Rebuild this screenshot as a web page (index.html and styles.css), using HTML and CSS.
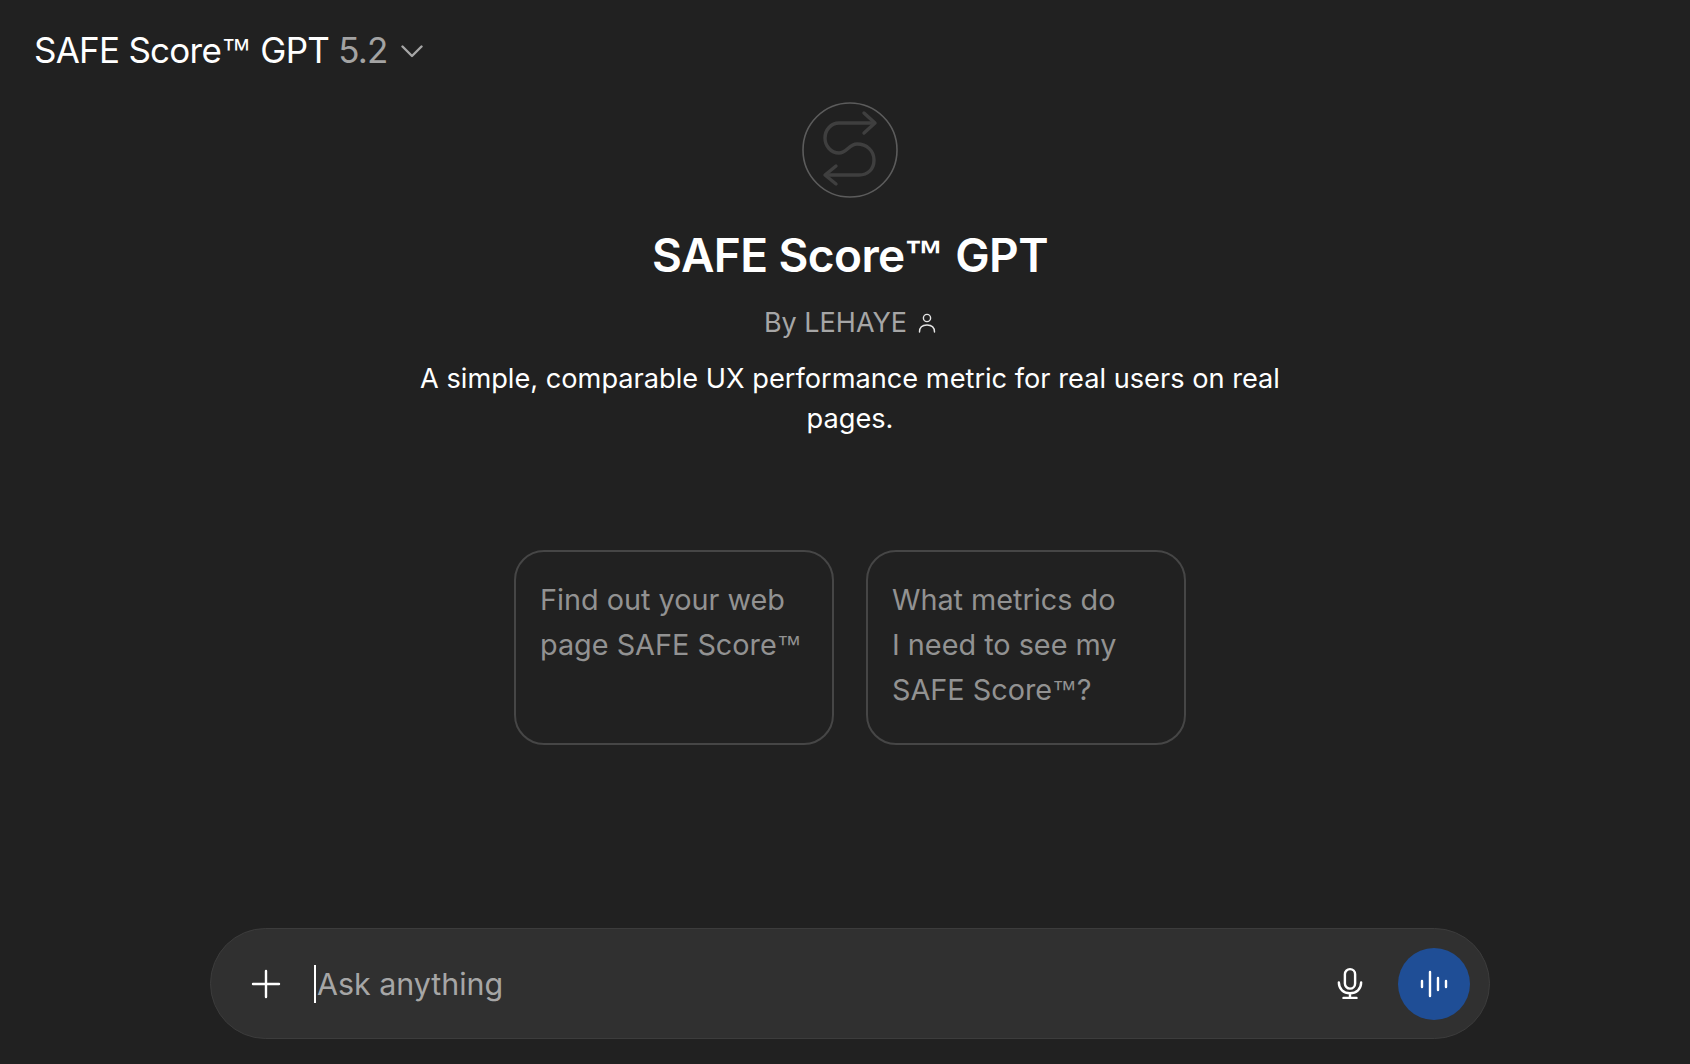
FILE: index.html
```html
<!DOCTYPE html>
<html>

<head>
    <meta charset="utf-8">
    <meta name="viewport" content="width=device-width">
    <title>SAFE Score GPT</title>
    <link rel="stylesheet" href="styles.css">
</head>

<body>
    <div class="page">
        <header class="topbar">
            <span class="model">SAFE Score<span class="tm">™</span> GPT <span class="version">5.2</span></span>
            <svg class="chevron" viewBox="0 0 22 14" width="22" height="14" fill="none" stroke="#a6a6a6" stroke-width="2.4" stroke-linecap="round" stroke-linejoin="round">
                <path d="M1.5 2.5 11 12 20.5 2.5" />
            </svg>
        </header>

        <main class="intro">
            <div class="logo">
                <svg viewBox="0 0 96 96" width="96" height="96" fill="none">
                    <circle cx="48" cy="48" r="47" stroke="#5c5c5c" stroke-width="1.6" />
                    <g stroke="#3f3f3f" stroke-width="3.4" stroke-linecap="round" stroke-linejoin="round">
                        <path d="M72 21H37C29 21 23 28 23 36C23 44 29 51 37 51C45 51 47 42 55 42C65 42 72 49 72 58C72 67 66 73 57 73H24" />
                        <path d="M62 11 73 21 62 31" />
                        <path d="M34 64 23 73 34 82" />
                    </g>
                </svg>
            </div>
            <h1>SAFE Score<span class="tm">™</span> GPT</h1>
            <div class="author">
                <span>By LEHAYE</span>
                <svg viewBox="0 0 18 20" width="18" height="20" fill="none" stroke="#e4e4e4" stroke-width="1.4" stroke-linecap="round">
                    <circle cx="9" cy="5" r="3.6" />
                    <path d="M1.5 19C1.5 14.5 4.5 12 9 12S16.5 14.5 16.5 19" />
                </svg>
            </div>
            <p class="desc">A simple, comparable UX performance metric for real users on real pages.</p>

            <div class="starters">
                <button class="starter"><span>Find out your web<br>page SAFE Score<span class="tm">™</span></span></button>
                <button class="starter"><span>What metrics do<br>I need to see my<br>SAFE Score<span class="tm">™</span>?</span></button>
            </div>
        </main>

        <div class="composer">
            <svg class="plus" viewBox="0 0 30 30" width="30" height="30" stroke="#fff" stroke-width="2.4" stroke-linecap="round">
                <path d="M15 2V28M2 15H28" />
            </svg>
            <div class="field"><span class="caret"></span><span class="placeholder">Ask anything</span></div>
            <svg class="mic" viewBox="0 0 28 34" width="26" height="33" fill="none" stroke="#fff" stroke-width="2.6" stroke-linecap="round">
                <rect x="8.5" y="1.5" width="11" height="21" rx="5.5" />
                <path d="M2 16C2 23 7 27.5 14 27.5S26 23 26 16M14 27.5V32.5M7 32.5H21" />
            </svg>
            <button class="voice">
                <svg viewBox="0 0 28 28" width="28" height="28" stroke="#fff" stroke-width="2.4" stroke-linecap="round">
                    <path d="M2 11V17M10 2V26M18 8V20M26 11V17" />
                </svg>
            </button>
        </div>
    </div>
</body>

</html>
```

FILE: styles.css
```css
* {
    margin: 0;
    padding: 0;
    box-sizing: border-box;
}

body {
    background: #212121;
    color: #fff;
    font-family: Inter, "Liberation Sans", sans-serif;
}

.page {
    height: 1064px;
    display: flex;
    flex-direction: column;
}

.topbar {
    height: 102px;
    padding: 0 0 2px 34px;
    display: flex;
    align-items: center;
    gap: 13px;
}

.model {
    font-size: 35px;
    line-height: 50px;
    letter-spacing: -0.75px;
}

.version {
    color: #a3a3a3;
}

/* Inter's trademark sign is too small next to the caps */
.tm {
    font-family: "Liberation Sans", sans-serif;
    font-size: .86em;
    line-height: 0;
    vertical-align: .1em;
    letter-spacing: 0;
}

.chevron {
    margin-top: 2px;
}

.intro {
    flex: 1;
    padding-left: 10px;
    display: flex;
    flex-direction: column;
    align-items: center;
}

.logo {
    height: 96px;
    width: 96px;
}

h1 {
    margin-top: 29px;
    font-size: 46px;
    line-height: 56px;
    font-weight: 600;
    letter-spacing: -0.6px;
}

.author {
    margin-top: 20px;
    display: flex;
    align-items: center;
    gap: 11px;
    color: #a6a6a6;
    font-size: 27px;
    line-height: 40px;
}

.desc {
    margin-top: 16px;
    width: 880px;
    text-align: center;
    font-size: 27.2px;
    line-height: 40px;
}

.starters {
    margin-top: 111px;
    display: flex;
    gap: 32px;
}

.starter {
    width: 320px;
    height: 195px;
    padding: 25px 24px;
    background: none;
    border: 2px solid #464646;
    border-radius: 30px;
    color: #929292;
    font-family: inherit;
    font-size: 28.8px;
    line-height: 45px;
    text-align: left;
    display: flex;
    align-items: flex-start;
}

.composer {
    margin: 0 200px 25px 210px;
    height: 111px;
    padding: 0 19px 0 40px;
    background: #303030;
    border: 1px solid #3c3c3c;
    border-radius: 56px;
    display: flex;
    align-items: center;
}

.plus {
    flex: none;
}

.field {
    flex: 1;
    margin-left: 33px;
    display: flex;
    align-items: center;
}

.caret {
    width: 2px;
    height: 38px;
    background: #fff;
}

.placeholder {
    margin-left: 1px;
    color: #a6a6a6;
    font-size: 30.4px;
    line-height: 38px;
}

.mic {
    flex: none;
    margin-right: 35px;
}

.voice {
    width: 72px;
    height: 72px;
    border: none;
    border-radius: 50%;
    background: #1f4e96;
    display: flex;
    align-items: center;
    justify-content: center;
}
```
